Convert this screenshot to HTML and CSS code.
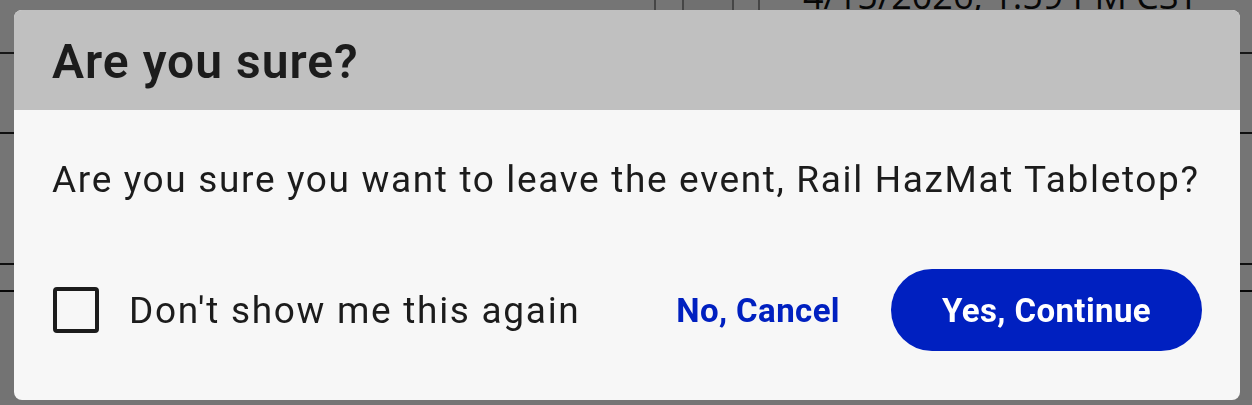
FILE: index.html
```html
<!DOCTYPE html>
<html lang="en">
<head>
    <meta charset="UTF-8">
    <meta name="viewport" content="width=device-width, initial-scale=1.0">
    <title>Leave Event</title>
    <link rel="stylesheet" href="styles.css">
</head>
<body>
    <!-- Page behind the modal -->
    <div class="page">
        <div class="top-row">
            <div class="cell cell-a"></div>
            <div class="cell cell-b"></div>
            <div class="cell cell-c"></div>
            <div class="cell cell-date">4/15/2026, 1:59 PM CST</div>
        </div>
        <div class="row row-mid"></div>
        <div class="row row-tabs"></div>
        <div class="row row-gap"></div>
        <div class="row row-lower">
            <span class="lower-text">Instructions</span>
        </div>
    </div>

    <!-- Leave event confirmation -->
    <div class="backdrop">
        <div class="dialog">
            <div class="dialog-header">
                <h2>Are you sure?</h2>
            </div>
            <div class="dialog-body">
                <p class="message">Are you sure you want to leave the event, Rail HazMat Tabletop?</p>
                <div class="dialog-actions">
                    <label class="dont-show">
                        <input type="checkbox" id="dont-show">
                        <span class="box"></span>
                        <span>Don't show me this again</span>
                    </label>
                    <div class="buttons">
                        <button class="btn btn-text" id="cancel-btn">No, Cancel</button>
                        <button class="btn btn-primary" id="continue-btn">Yes, Continue</button>
                    </div>
                </div>
            </div>
        </div>
    </div>
</body>
</html>
```

FILE: styles.css
```css
body {
    margin: 0;
    height: 405px;
    overflow: hidden;
    font-family: Roboto, "Liberation Sans", sans-serif;
    background: #fff;
}

/* page content under the overlay */
.page {
    color: #111;
}
.top-row {
    display: flex;
    height: 52px;
    border-bottom: 2px solid #333;
    padding-left: 654px;
}
.cell {
    border-left: 2px solid #999;
    height: 100%;
}
.cell-a {
    width: 26px;
}
.cell-b {
    width: 48px;
    background: #f4f4f4;
}
.cell-c {
    width: 24px;
    border-right: 2px solid #999;
}
.cell-date {
    border: none;
    padding-left: 43px;
    font-size: 36px;
    line-height: 1;
    margin-top: -22px;
    white-space: nowrap;
    font-family: "Open Sans", sans-serif;
}
.row {
    border-bottom: 2px solid #222;
}
.row-mid {
    height: 78px;
}
.row-tabs {
    height: 129px;
}
.row-gap {
    height: 25px;
    border-bottom: 2px solid #111;
}
.row-lower {
    height: 50px;
    background: #fbfbfb;
    border: none;
    padding: 58px 0 0 604px;
}
.lower-text {
    font-size: 40px;
    font-weight: 700;
}

/* modal */
.backdrop {
    position: fixed;
    inset: 0;
    background: rgba(0, 0, 0, 0.54);
}
.dialog {
    position: absolute;
    left: 14px;
    top: 10px;
    width: 1226px;
    height: 390px;
    border-radius: 8px;
    overflow: hidden;
    background: #f7f7f7;
    display: flex;
    flex-direction: column;
}
.dialog-header {
    height: 100px;
    background: #c0c0c0;
    padding: 2px 38px 0;
    box-sizing: border-box;
    display: flex;
    align-items: center;
}
.dialog-header h2 {
    margin: 0;
    font-size: 48px;
    font-weight: 600;
    letter-spacing: 1px;
    color: #1c1c1c;
}
.dialog-body {
    padding: 44px 38px 0;
}
.message {
    margin: 0;
    font-size: 37px;
    line-height: 52px;
    letter-spacing: 1.65px;
    color: #1c1c1c;
}
.dialog-actions {
    display: flex;
    align-items: center;
    justify-content: space-between;
    margin-top: 63px;
}
.dont-show {
    display: flex;
    align-items: center;
    gap: 30px;
    font-size: 37px;
    letter-spacing: 1.7px;
    color: #1c1c1c;
    cursor: pointer;
}
.dont-show input {
    display: none;
}
.dont-show .box {
    width: 38px;
    height: 38px;
    border: 4px solid #1c1c1c;
    border-radius: 4px;
    margin-left: 1px;
}
.dont-show input:checked + .box {
    background: #0020c0;
    border-color: #0020c0;
}
.buttons {
    display: flex;
    align-items: center;
    gap: 51px;
}
.btn {
    font-family: Roboto, "Liberation Sans", sans-serif;
    font-size: 33px;
    font-weight: 700;
    letter-spacing: 0.4px;
    border: none;
    cursor: pointer;
}
.btn-text {
    background: none;
    color: #0020c0;
    padding: 0;
}
.btn-primary {
    background: #0020c0;
    color: #fff;
    width: 311px;
    height: 82px;
    border-radius: 41px;
}
```
